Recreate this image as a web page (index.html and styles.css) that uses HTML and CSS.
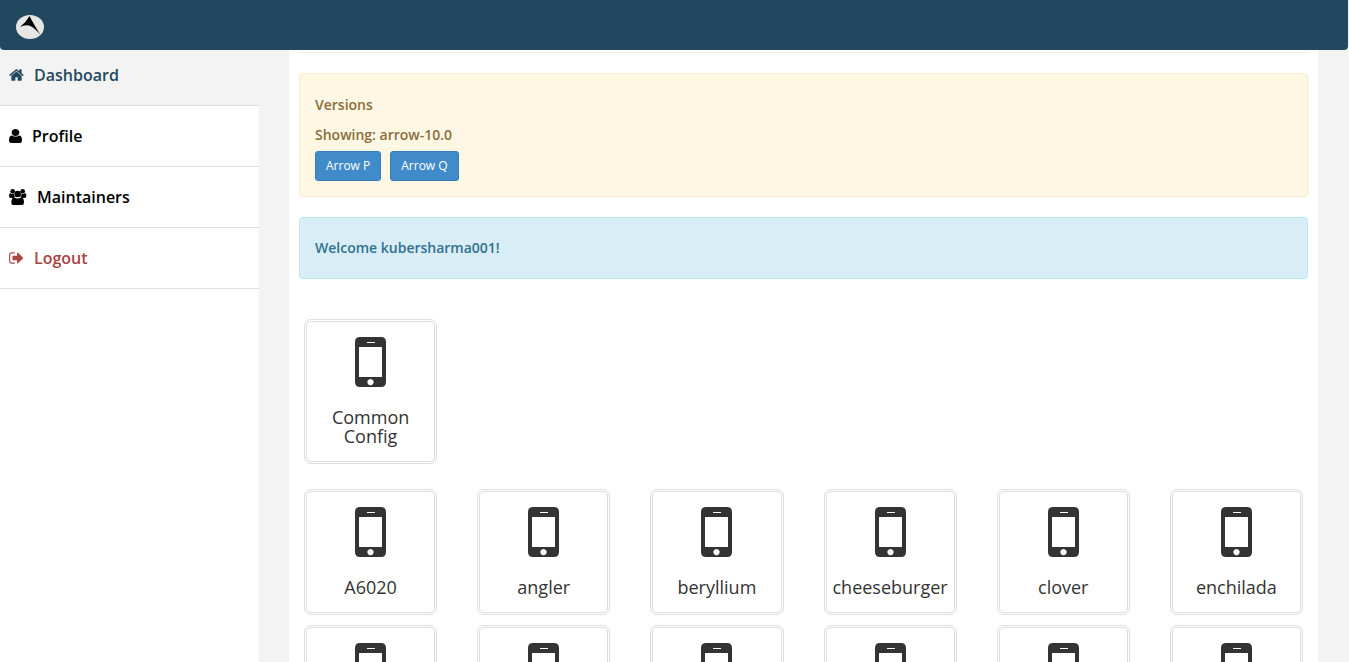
FILE: index.html
```
<!DOCTYPE html>
<html lang="en">
<head>
<meta charset="utf-8">
<title>Dashboard</title>
<link rel="stylesheet" href="styles.css">
</head>
<body>
<svg class="defs" aria-hidden="true">
  <symbol id="phone" viewBox="0 0 31 50">
    <path fill-rule="evenodd" d="M5 0H26Q31 0 31 5V45Q31 50 26 50H5Q0 50 0 45V5Q0 0 5 0ZM4 10V40H27V10ZM12 5V6H20V5ZM15.500 42a3.100 3.100 0 1 0 .01 0Z"/>
  </symbol>
</svg>
<header class="topbar">
  <a class="brand" href="#" aria-label="Home">
    <svg width="28" height="24" viewBox="0 0 28 24"><ellipse cx="14" cy="12" rx="14" ry="12" fill="#e6e6e4"/><path d="M13.500 1Q17 8 24.500 20Q18.500 12.500 13 10.500Q8.500 9.500 4 12Q10 7.500 13.500 1Z" fill="#000"/></svg>
  </a>
</header>
<div class="layout">
  <nav class="sidebar">
    <a class="item active" href="#"><svg width="15" height="16" viewBox="64 0 1664 1792"><path d="M1472 992v480q0 26-19 45t-45 19h-384v-384h-256v384h-384q-26 0-45-19t-19-45v-480q0-1 .5-3t.5-3l575-474 575 474q1 2 1 6zm223-69l-62 74q-8 9-21 11h-3q-13 0-21-7l-692-577-692 577q-12 8-24 7-13-2-21-11l-62-74q-8-10-7-23.500t11-21.500l719-599q32-26 76-26t76 26l244 204v-195q0-14 9-23t23-9h192q14 0 23 9t9 23v408l219 182q10 8 11 21.500t-7 23.500z"/></svg>Dashboard</a>
    <a class="item" href="#"><svg width="13" height="14" viewBox="256 128 1280 1536" preserveAspectRatio="none"><path d="M1536 1399q0 109-62.500 187t-150.500 78h-854q-88 0-150.500-78t-62.500-187q0-85 8.500-160.500t31.500-152 58.500-131 94-89 134.500-34.500q131 128 313 128t313-128q76 0 134.500 34.500t94 89 58.500 131 31.500 152 8.500 160.500zm-256-887q0 159-112.500 271.500t-271.500 112.500-271.500-112.500-112.500-271.500 112.500-271.500 271.500-112.500 271.500 112.500 112.500 271.500z"/></svg>Profile</a>
    <a class="item" href="#"><svg width="18" height="16" viewBox="0 0 18 16"><circle cx="3.700" cy="2.300" r="2.300"/><circle cx="13.700" cy="2.300" r="2.300"/><circle cx="8.700" cy="5" r="3.300"/><path d="M1.300 4Q3.500 5.600 4.800 4.300Q4.700 6.500 6 8Q4.500 8 3.700 9H2Q0 9 0 7.300Q0 4.500 1.300 4ZM16.100 4Q13.900 5.600 12.600 4.300Q12.700 6.500 11.400 8Q12.900 8 13.700 9H15.400Q17.400 9 17.400 7.300Q17.400 4.500 16.100 4ZM5.200 8.200Q8.700 11 12.200 8.200Q15 8.500 15 13.400Q15 16 12.700 16H4.700Q2.400 16 2.400 13.400Q2.400 8.500 5.200 8.200Z"/></svg>Maintainers</a>
    <a class="item logout" href="#"><svg width="15" height="16" viewBox="64 0 1664 1792"><path d="M704 1440q0 4 1 20t.5 26.500-3 23.500-10 19.500-20.500 6.500h-320q-119 0-203.500-84.500t-84.500-203.500v-704q0-119 84.500-203.500t203.500-84.500h320q13 0 22.500 9.500t9.500 22.500q0 4 1 20t.5 26.500-3 23.500-10 19.500-20.500 6.500h-320q-66 0-113 47t-47 113v704q0 66 47 113t113 47h312l11.500 1 11.500 3 8 5.500 7 9 2 13.500zm928-544q0 26-19 45l-544 544q-19 19-45 19t-45-19-19-45v-288h-448q-26 0-45-19t-19-45v-384q0-26 19-45t45-19h448v-288q0-26 19-45t45-19 45 19l544 544q19 19 19 45z"/></svg>Logout</a>
  </nav>
  <main class="content">
    <hr class="rule">
    <section class="notice versions">
      <h2 class="notice-text">Versions</h2>
      <h3 class="notice-text">Showing: arrow-10.0</h3>
      <div class="actions">
        <button class="btn" type="button">Arrow P</button>
        <button class="btn" type="button">Arrow Q</button>
      </div>
    </section>
    <section class="notice welcome"><h2 class="notice-text">Welcome kubersharma001!</h2></section>
    <div class="tiles common">
      <a class="tile" href="#"><svg class="phone"><use href="#phone"/></svg><span>Common Config</span></a>
    </div>
    <div class="tiles">
      <a class="tile" href="#"><svg class="phone"><use href="#phone"/></svg><span>A6020</span></a>
      <a class="tile" href="#"><svg class="phone"><use href="#phone"/></svg><span>angler</span></a>
      <a class="tile" href="#"><svg class="phone"><use href="#phone"/></svg><span>beryllium</span></a>
      <a class="tile" href="#"><svg class="phone"><use href="#phone"/></svg><span>cheeseburger</span></a>
      <a class="tile" href="#"><svg class="phone"><use href="#phone"/></svg><span>clover</span></a>
      <a class="tile" href="#"><svg class="phone"><use href="#phone"/></svg><span>enchilada</span></a>
      <a class="tile" href="#"><svg class="phone"><use href="#phone"/></svg></a>
      <a class="tile" href="#"><svg class="phone"><use href="#phone"/></svg></a>
      <a class="tile" href="#"><svg class="phone"><use href="#phone"/></svg></a>
      <a class="tile" href="#"><svg class="phone"><use href="#phone"/></svg></a>
      <a class="tile" href="#"><svg class="phone"><use href="#phone"/></svg></a>
      <a class="tile" href="#"><svg class="phone"><use href="#phone"/></svg></a>
    </div>
  </main>
</div>
</body>
</html>
```
FILE: styles.css
```
* { box-sizing: border-box; }
body {
  margin: 0;
  height: 100vh;
  overflow: hidden;
  display: flex;
  flex-direction: column;
  background: #f3f3f3;
  color: #333;
  font-family: "Open Sans", sans-serif;
  font-size: 14px;
}
a { color: inherit; text-decoration: none; }
.defs { display: none; }
.topbar {
  flex: none;
  display: flex;
  align-items: center;
  height: 50px;
  margin-right: 1px;
  padding: 4px 16px 0;
  background: #22485f;
  border-radius: 0 0 4px 4px;
}
.brand svg { display: block; }
.layout {
  flex: 1;
  min-height: 0;
  display: flex;
  gap: 30px;
  padding-right: 31px;
}
.sidebar { flex: none; width: 259px; background: #fff; }
.item {
  display: flex;
  align-items: center;
  gap: 10px;
  height: 61px;
  padding-left: 9px;
  border-bottom: 1px solid #e0e0e0;
  color: #000;
  fill: currentColor;
  font-size: 16px;
  font-weight: 600;
}
.active {
  height: 56px;
  padding-bottom: 5px;
  background: #f3f3f3;
  color: #22485f;
}
.logout { color: #a94442; }
.content {
  flex: 1;
  min-width: 0;
  overflow: hidden;
  padding: 2px 10px 0;
  background: #fff;
}
.rule { margin: 0 0 20px; border: 0; border-top: 1px solid #eee; }
.notice {
  margin-bottom: 20px;
  padding: 20px 15px;
  border: 1px solid;
  border-radius: 4px;
}
.versions {
  padding-top: 21px;
  padding-bottom: 15px;
  border-color: #faebcc;
  background: #fdf7e3;
  color: #8a6d3b;
}
.welcome {
  margin-bottom: 40px;
  border-color: #bce8f1;
  background: #d9edf7;
  color: #31708f;
}
.notice-text { margin: 0; font-size: 14px; line-height: 20px; font-weight: 600; }
h3.notice-text { margin-top: 10px; }
.actions { display: flex; gap: 9px; margin-top: 6px; }
.btn {
  height: 30px;
  padding: 0 10px;
  border: 1px solid #357ebd;
  border-radius: 3px;
  background: #428bca;
  color: #fff;
  font: 12px/18px "Open Sans", sans-serif;
}
.tiles {
  display: grid;
  grid-template-columns: repeat(6, minmax(0, 1fr));
  gap: 10px 40px;
  padding: 0 5px;
}
.common { margin-bottom: 25px; }
.tile {
  display: flex;
  flex-direction: column;
  align-items: center;
  gap: 21px;
  min-height: 126px;
  padding: 15px 2px;
  border: 3px double #ddd;
  border-radius: 7px;
  font-size: 18px;
  line-height: 19px;
  text-align: center;
}
.phone { flex: none; width: 31px; height: 50px; fill: #333; }
```
